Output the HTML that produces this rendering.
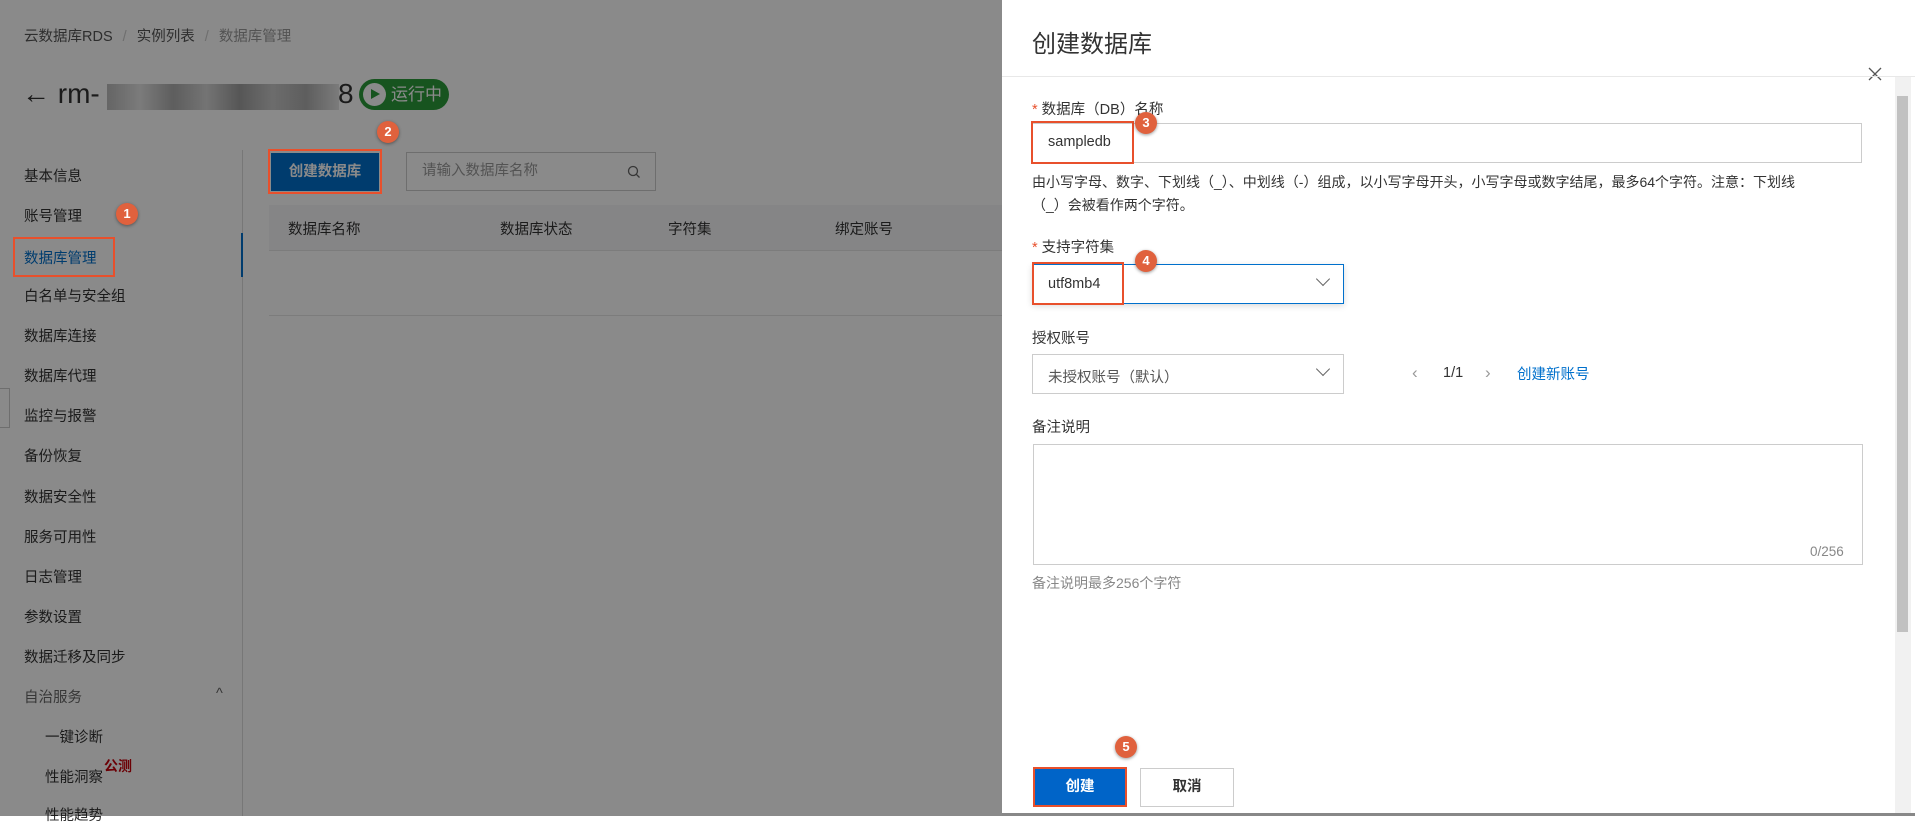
<!DOCTYPE html>
<html><head><meta charset="utf-8"><style>
*{margin:0;padding:0;box-sizing:border-box}
body{width:1915px;height:816px;overflow:hidden;position:relative;background:#fff;font-family:"Liberation Sans","Noto Sans CJK SC",sans-serif;color:#333;font-size:14.5px}
.a{position:absolute;white-space:nowrap}
.ov{position:absolute;left:0;top:0;width:1002px;height:816px;background:rgba(0,0,0,0.46)}
.badge{position:absolute;width:22px;height:22px;border-radius:50%;background:#e0613d;color:#fff;font-size:13px;font-weight:bold;text-align:center;line-height:22px;box-shadow:0 1px 3px rgba(0,0,0,.4)}
.red{position:absolute;border:2px solid #e8502c}
.nav{position:absolute;left:24px;font-size:14.5px;color:#333}
</style></head><body>
<div class="a" style="left:24px;top:25px;font-size:14.5px;color:#555">云数据库RDS <span style="color:#ccc;margin:0 6px">/</span> 实例列表 <span style="color:#ccc;margin:0 6px">/</span> <span style="color:#999">数据库管理</span></div>
<div class="a" style="left:22px;top:78px;font-size:28px;color:#333">← rm-</div>
<div class="a" style="left:107px;top:84px;width:232px;height:26px;background:linear-gradient(90deg,#aaa,#ddd,#999,#ccc,#888,#bbb,#999,#ddd);opacity:.8"></div>
<div class="a" style="left:338px;top:78px;font-size:28px;color:#333">8</div>
<div class="a" style="left:359px;top:79px;width:90px;height:31px;border-radius:16px;background:#2c9b3a;color:#fff;font-size:17px;line-height:31px;padding-left:32px">运行中</div>
<div class="a" style="left:363px;top:83px;width:23px;height:23px;border-radius:50%;background:#fff"></div>
<div class="a" style="left:371px;top:89px;width:0;height:0;border-left:9px solid #2c9b3a;border-top:5.5px solid transparent;border-bottom:5.5px solid transparent"></div>
<div class="a" style="left:242px;top:150px;width:1px;height:666px;background:#ddd"></div>
<div class="a" style="left:241px;top:233px;width:2px;height:44px;background:#0070cc"></div>
<div class="nav" style="top:165px">基本信息</div>
<div class="nav" style="top:205px">账号管理</div>
<div class="nav" style="top:247px;color:#0070cc">数据库管理</div>
<div class="nav" style="top:285px">白名单与安全组</div>
<div class="nav" style="top:325px">数据库连接</div>
<div class="nav" style="top:365px">数据库代理</div>
<div class="nav" style="top:405px">监控与报警</div>
<div class="nav" style="top:445px">备份恢复</div>
<div class="nav" style="top:486px">数据安全性</div>
<div class="nav" style="top:526px">服务可用性</div>
<div class="nav" style="top:566px">日志管理</div>
<div class="nav" style="top:606px">参数设置</div>
<div class="nav" style="top:646px">数据迁移及同步</div>
<div class="nav" style="top:686px;color:#666">自治服务</div>
<div class="a" style="left:216px;top:686px;color:#666">^</div>
<div class="nav" style="top:726px;left:45px">一键诊断</div>
<div class="nav" style="top:766px;left:45px">性能洞察</div>
<div class="a" style="left:104px;top:756px;color:#c7000b;font-weight:bold;font-size:14px">公测</div>
<div class="nav" style="top:804px;left:45px">性能趋势</div>
<div class="a" style="left:0;top:388px;width:10px;height:40px;border:1px solid #ccc;border-left:none;background:#fff"></div>
<div class="a" style="left:271px;top:153px;width:108px;height:38px;background:#0070cc;color:#fff;font-size:14.5px;font-weight:bold;line-height:38px;text-align:center">创建数据库</div>
<div class="a" style="left:406px;top:152px;width:250px;height:39px;border:1px solid #ccc;background:#fff;color:#999;line-height:37px;padding-left:15px">请输入数据库名称</div>
<svg class="a" style="left:627px;top:165px" width="14" height="14" viewBox="0 0 14 14"><circle cx="6" cy="6" r="4.5" fill="none" stroke="#666" stroke-width="1.3"/><path d="M9.3 9.3L12.5 12.5" stroke="#666" stroke-width="1.3"/></svg>
<div class="a" style="left:269px;top:205px;width:733px;height:46px;background:#f5f6f8;border-bottom:1px solid #e5e5e5"></div>
<div class="a" style="left:288px;top:218px">数据库名称</div>
<div class="a" style="left:500px;top:218px">数据库状态</div>
<div class="a" style="left:668px;top:218px">字符集</div>
<div class="a" style="left:835px;top:218px">绑定账号</div>
<div class="a" style="left:269px;top:315px;width:733px;height:1px;background:#e5e5e5"></div>
<div class="ov"></div>
<div class="red" style="left:13px;top:237px;width:102px;height:40px"></div>
<div class="badge" style="left:116px;top:203px">1</div>
<div class="red" style="left:268px;top:149px;width:114px;height:45px"></div>
<div class="badge" style="left:377px;top:121px">2</div>
<div class="a" style="left:1002px;top:0;width:913px;height:813px;background:#fff"></div>
<div class="a" style="left:1002px;top:813px;width:913px;height:3px;background:#888"></div>
<div class="a" style="left:1032px;top:24px;font-size:24px;color:#333">创建数据库</div>
<svg class="a" style="left:1868px;top:67px" width="14" height="14" viewBox="0 0 14 14"><path d="M1 1L13 13M13 1L1 13" stroke="#555" stroke-width="1.3"/></svg>
<div class="a" style="left:1002px;top:76px;width:913px;height:1px;background:#e8e8e8"></div>
<div class="a" style="left:1895px;top:77px;width:16px;height:736px;background:#f1f1f1"></div>
<div class="a" style="left:1897px;top:96px;width:11px;height:536px;background:#c1c1c1"></div>
<div class="a" style="left:1032px;top:98px"><span style="color:#e8502c">*</span> 数据库（DB）名称</div>
<div class="a" style="left:1032px;top:123px;width:830px;height:40px;border:1px solid #ccc"></div>
<div class="a" style="left:1048px;top:134px">sampledb</div>
<div class="red" style="left:1031px;top:121px;width:103px;height:43px"></div>
<div class="badge" style="left:1135px;top:112px">3</div>
<div class="a" style="left:1032px;top:171px;font-size:14px;line-height:23px;color:#333">由小写字母、数字、下划线（_）、中划线（-）组成，以小写字母开头，小写字母或数字结尾，最多64个字符。注意：下划线<br>（_）会被看作两个字符。</div>
<div class="a" style="left:1032px;top:236px"><span style="color:#e8502c">*</span> 支持字符集</div>
<div class="a" style="left:1032px;top:264px;width:312px;height:40px;border:1px solid #0070cc;box-shadow:0 2px 6px rgba(0,0,0,.15)"></div>
<div class="a" style="left:1048px;top:276px">utf8mb4</div>
<div class="a" style="left:1318px;top:274px;width:10px;height:10px;border-right:1.5px solid #666;border-bottom:1.5px solid #666;transform:rotate(45deg)"></div>
<div class="red" style="left:1032px;top:262px;width:92px;height:43px"></div>
<div class="badge" style="left:1135px;top:250px">4</div>
<div class="a" style="left:1032px;top:327px">授权账号</div>
<div class="a" style="left:1032px;top:354px;width:312px;height:40px;border:1px solid #ccc"></div>
<div class="a" style="left:1048px;top:366px;color:#555">未授权账号（默认）</div>
<div class="a" style="left:1318px;top:364px;width:10px;height:10px;border-right:1.5px solid #666;border-bottom:1.5px solid #666;transform:rotate(45deg)"></div>
<div class="a" style="left:1412px;top:363px;font-size:17px;color:#999">‹</div>
<div class="a" style="left:1443px;top:365px;color:#333">1/1</div>
<div class="a" style="left:1485px;top:363px;font-size:17px;color:#999">›</div>
<div class="a" style="left:1517px;top:363px;color:#0070cc">创建新账号</div>
<div class="a" style="left:1032px;top:416px">备注说明</div>
<div class="a" style="left:1033px;top:444px;width:830px;height:121px;border:1px solid #ccc"></div>
<div class="a" style="left:1810px;top:544px;color:#888;font-size:13.5px">0/256</div>
<div class="a" style="left:1032px;top:573px;color:#888;font-size:14px">备注说明最多256个字符</div>
<div class="a" style="left:1033px;top:767px;width:94px;height:40px;background:#0064c8;border:2px solid #e8502c;color:#fff;font-weight:bold;line-height:36px;text-align:center">创建</div>
<div class="a" style="left:1140px;top:768px;width:94px;height:39px;border:1px solid #ccc;color:#333;font-weight:bold;line-height:37px;text-align:center">取消</div>
<div class="badge" style="left:1115px;top:736px">5</div>
</body></html>
